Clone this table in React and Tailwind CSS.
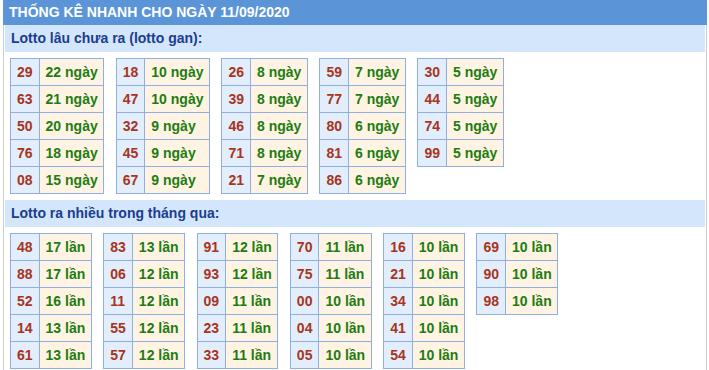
import React from "react";

const gan = [
  [["29", 22], ["63", 21], ["50", 20], ["76", 18], ["08", 15]],
  [["18", 10], ["47", 10], ["32", 9], ["45", 9], ["67", 9]],
  [["26", 8], ["39", 8], ["46", 8], ["71", 8], ["21", 7]],
  [["59", 7], ["77", 7], ["80", 6], ["81", 6], ["86", 6]],
  [["30", 5], ["44", 5], ["74", 5], ["99", 5]],
];

const nhieu = [
  [["48", 17], ["88", 17], ["52", 16], ["14", 13], ["61", 13]],
  [["83", 13], ["06", 12], ["11", 12], ["55", 12], ["57", 12]],
  [["91", 12], ["93", 12], ["09", 11], ["23", 11], ["33", 11]],
  [["70", 11], ["75", 11], ["00", 10], ["04", 10], ["05", 10]],
  [["16", 10], ["21", 10], ["34", 10], ["41", 10], ["54", 10]],
  [["69", 10], ["90", 10], ["98", 10]],
];

// one small 2-column table: number | count
const StatTable = ({ rows, unit }) => (
  <table className="border-collapse self-start">
    <tbody>
      {rows.map(([num, count]) => (
        <tr key={num} className="h-[27px]">
          <td className="border border-[#8fafe1] bg-[#e3eefc] px-[6px] text-[#a8341c]">
            {num}
          </td>
          <td className="border border-[#8fafe1] bg-[#fff4e3] pl-[6px] pr-[5.5px] text-[#1e7c12]">
            {count} {unit}
          </td>
        </tr>
      ))}
    </tbody>
  </table>
);

const Section = ({ title, groups, unit }) => (
  <div>
    <div className="h-[27px] bg-[#d3e6fb] pl-[6px] text-[14px] leading-[27px] font-bold text-[#1b3d8f]">
      {title}
    </div>
    <div className="flex gap-[11.5px] px-[5px] pt-[6px] pb-[6px]">
      {groups.map((rows, i) => (
        <StatTable key={i} rows={rows} unit={unit} />
      ))}
    </div>
  </div>
);

export default function App() {
  return (
    <div
      className="min-h-[370px] bg-white pl-[3px] pr-[2px] text-[14px] font-bold leading-none"
      style={{ fontFamily: '"Liberation Sans", Arial, sans-serif' }}
    >
      <div className="h-[25px] bg-[#5b95d8] pl-[6px] text-[14px] leading-[25px] text-white">
        THỐNG KÊ NHANH CHO NGÀY 11/09/2020
      </div>
      <div className="min-h-[345px] border-x border-[#c9ccd2] px-px">
        <Section title="Lotto lâu chưa ra (lotto gan):" groups={gan} unit="ngày" />
        <Section title="Lotto ra nhiều trong tháng qua:" groups={nhieu} unit="lần" />
      </div>
    </div>
  );
}
